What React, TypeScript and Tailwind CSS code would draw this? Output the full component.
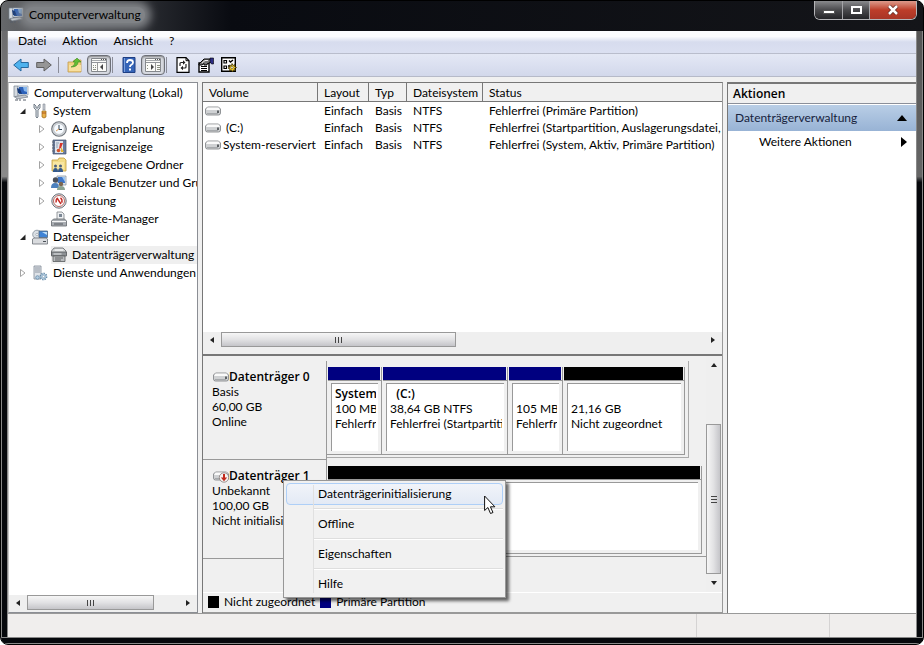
import React, { useState } from 'react';
import { clsx } from 'clsx';

type IconProps = { className?: string };

const Svg: React.FC<{ className?: string; box?: string; children: React.ReactNode }> = ({ className, box = '0 0 16 16', children }) => (
  <svg viewBox={box} className={clsx('shrink-0', className ?? 'w-4 h-4')} aria-hidden="true">
    {children}
  </svg>
);

const ComputerIcon = ({ className }: IconProps) => (
  <Svg className={className}>
    <path d="M1 1h4v11H1z" fill="#d5dae0" stroke="#77818e" strokeWidth=".7" />
    <path d="M5 1h10v9H5z" fill="#e9eef4" stroke="#8795a6" strokeWidth=".7" />
    <path d="M6 2h8v7H6z" fill="#2d62ba" />
    <path d="M10 2h4v5l-3-1z" fill="#86b7ee" />
    <path d="M4 3l3 1 2 5-4-1z" fill="#173a78" />
    <path d="M2 11.500l10-1.500 3 2-11 2z" fill="#c3c8ce" stroke="#707984" strokeWidth=".7" />
    <path d="M2 15h3M6 15h2M10 15h3" stroke="#555d68" />
  </Svg>
);

const ToolsIcon = () => (
  <Svg>
    <path d="M2 1v4l2 2v7q1 2 2 0V7l2-2V1L6 3v2H4V3z" fill="#dfe4e9" stroke="#6a747f" strokeWidth=".9" />
    <path d="M11 1h2v6h-2z" fill="#c9ced4" stroke="#808890" strokeWidth=".6" />
    <path d="M10 8h4v6q-2 2-4 0z" fill="#e9b04a" stroke="#9b6a17" strokeWidth=".7" />
    <path d="M10 10h4" stroke="#b0581a" />
  </Svg>
);

const ClockIcon = () => (
  <Svg>
    <circle cx="8" cy="8" r="7.3" fill="#d4d7da" stroke="#6f757c" strokeWidth="1.100" />
    <circle cx="8" cy="8" r="5.4" fill="#f7fbff" stroke="#a6acb4" strokeWidth=".6" />
    <path d="M8 4v4.5h3" fill="none" stroke="#345" strokeWidth="1" />
    <path d="M8 8L5 10" stroke="#d98b38" strokeWidth=".8" />
  </Svg>
);

const EventIcon = () => (
  <Svg>
    <path d="M2 1h13v14H2z" fill="#6a7da0" stroke="#44516a" strokeWidth=".7" />
    <path d="M4 2h8v12H4z" fill="#dfe4ec" />
    <path d="M1 3h3M1 6h3M1 9h3M1 12h3" stroke="#5c6677" />
    <path d="M5 4h3M5 6h2M5 8h2" stroke="#7e8fa8" strokeWidth=".8" />
    <path d="M9 4l3 0-2 5-2 1z" fill="#d5362b" />
    <circle cx="7.500" cy="11.500" r="1.800" fill="#d3542b" />
    <path d="M10 8l3 5h-3z" fill="#e6b52e" />
  </Svg>
);

const SharedFolderIcon = () => (
  <Svg>
    <path d="M1 3h6l1-2h5l2 2v11H1z" fill="#f3dc87" stroke="#c29d3c" strokeWidth=".8" />
    <path d="M2 5h11v7H2z" fill="#f9e7a2" />
    <circle cx="4.500" cy="9" r="1.500" fill="#4d5f7c" />
    <circle cx="9.500" cy="9" r="1.500" fill="#4d5f7c" />
    <path d="M2 15q0-4 2.500-4T7 15zM7 15q0-4 2.500-4t2.500 4z" fill="#345a8c" />
  </Svg>
);

const UsersIcon = () => (
  <Svg>
    <path d="M6 1h9v9H6z" fill="#e2e8ef" stroke="#7d8998" strokeWidth=".7" />
    <path d="M7 2h7v6H7z" fill="#3d76c9" />
    <path d="M11 2h3v5z" fill="#9ac5f2" />
    <circle cx="4.500" cy="5" r="2.700" fill="#4a4f58" />
    <path d="M0 13q0-5 4-5t4 5z" fill="#4b80bd" />
    <circle cx="10" cy="9" r="2.200" fill="#7c6750" />
    <path d="M6 15q0-4 4-4t4 4z" fill="#8aa392" />
  </Svg>
);

const GaugeIcon = () => (
  <Svg>
    <circle cx="8" cy="8" r="7.200" fill="#e2e4e6" stroke="#6d737b" strokeWidth="1" />
    <circle cx="8" cy="8" r="5.500" fill="#fff" stroke="#b05b55" strokeWidth=".9" />
    <path d="M5.200 9.500q-.6-3 1.300-4.500M6 5l4 6M9.500 4.700q2.300 2 1.200 5" fill="none" stroke="#c52a24" strokeWidth="1.400" />
  </Svg>
);

const DeviceIcon = () => (
  <Svg>
    <path d="M6 1h5l2 2v6H6z" fill="#eef0f2" stroke="#7c8085" strokeWidth=".8" />
    <path d="M0.500 10l2-2h11l2 2v5h-15z" fill="#a9adb2" stroke="#63676c" strokeWidth=".8" />
    <path d="M1 10.500h14" stroke="#f5f5f5" />
    <path d="M3 13h9" stroke="#55595e" />
    <path d="M8 3h3v3H8z" fill="#7b8794" />
  </Svg>
);

const StorageIcon = () => (
  <Svg>
    <circle cx="5" cy="5.500" r="4.300" fill="#dbe0e5" stroke="#7f8b97" strokeWidth=".8" />
    <circle cx="5" cy="5.500" r="1.200" fill="#fff" stroke="#8b95a0" strokeWidth=".6" />
    <path d="M7 2h8.500v6.500H7z" fill="#3f83d6" stroke="#54677c" strokeWidth=".8" />
    <path d="M10 3h5v3z" fill="#bfe0fa" />
    <path d="M.5 10l1.500-1h12l1.500 1v5H.5z" fill="#d9dbde" stroke="#6b7076" strokeWidth=".8" />
    <path d="M11 12.500h3" stroke="#4b5157" strokeWidth="1.200" />
  </Svg>
);

const DiskMgmtIcon = () => (
  <Svg>
    <path d="M3 1h9l3 3v4H.5V4z" fill="#d3d6d8" stroke="#5d6063" strokeWidth=".8" />
    <path d="M4 3h8" stroke="#fff" />
    <path d="M.5 5h15v4H.5z" fill="#8d9195" stroke="#505356" strokeWidth=".7" />
    <path d="M2.500 7h8" stroke="#e8eaec" />
    <path d="M2 9h12v5.500H2z" fill="#b9bcbf" stroke="#55585b" strokeWidth=".8" />
    <path d="M4 11h8M4 13h6" stroke="#4c4f52" strokeWidth=".8" />
  </Svg>
);

const ServicesIcon = () => (
  <Svg>
    <path d="M2 1h7v13H2z" fill="#dfe3e8" stroke="#7f8994" strokeWidth=".8" />
    <path d="M3 3h5M3 5h5M3 7h5" stroke="#7b8792" strokeWidth=".8" />
    <circle cx="11.500" cy="11.500" r="3" fill="#c6dced" stroke="#668ba9" strokeWidth="1.800" strokeDasharray="1.300 1" />
    <circle cx="11.500" cy="11.500" r="1.200" fill="#fff" stroke="#668ba9" strokeWidth=".6" />
    <circle cx="5.500" cy="12.500" r="1.800" fill="#b3cce0" stroke="#668ba9" strokeWidth=".8" />
  </Svg>
);

const DriveIcon = ({ alert = false }: { alert?: boolean }) => (
  <Svg>
    <path d="M2.500 4h11l2 2v4q0 2-2 2h-11q-2 0-2-2V6z" fill="#cfd1d3" stroke="#7b7e81" strokeWidth=".8" />
    <path d="M2.500 4.500h11l1.500 2.500H1z" fill="#fafafa" />
    <path d="M2 10.500h11" stroke="#a6a9ac" />
    <path d="M12 7.500h2v2.500h-2z" fill="#5d6164" />
    {alert && (
      <>
        <circle cx="11" cy="9.500" r="4.700" fill="#f6f3f2" stroke="#857b79" strokeWidth=".8" />
        <path d="M10 6h2v3.500h2.200L11 13.300 7.800 9.500H10z" fill="#c22a1c" />
      </>
    )}
  </Svg>
);

const ArrowIcon = ({ back = false }: { back?: boolean }) => (
  <Svg>
    {back ? (
      <path d="M.7 8L8 2v3.500h7.300v5H8V14z" fill="#4eb2ee" stroke="#27699f" strokeWidth="1" />
    ) : (
      <path d="M15.300 8L8 2v3.500H.7v5H8V14z" fill="#969696" stroke="#606060" strokeWidth="1" />
    )}
  </Svg>
);

const FolderUpIcon = () => (
  <Svg>
    <path d="M1 5h5l1-2h7v12H1z" fill="#f2d384" stroke="#c29a4c" strokeWidth=".8" />
    <path d="M2 8h12v6H2z" fill="#f8e0a0" />
    <path d="M4 10q4-1 4-5H6l4-4 4 4h-3q0 5-7 5" fill="#62bd35" stroke="#3d8b20" strokeWidth=".6" />
  </Svg>
);

const PaneIcon = ({ right = false }: { right?: boolean }) => (
  <Svg className="w-4 h-4">
    <path d="M.5 1.500h15v13H.5z" fill="#fbfbf8" stroke="#85888c" />
    <path d="M1 3.500h14" stroke="#a5a8ab" strokeWidth="1" />
    <path d="M10 2.500h1M12 2.500h1M14 2.500h1" stroke="#555" strokeWidth="1" />
    <path d="M1 5.500h14" stroke="#92959a" strokeWidth="1" />
    {right ? (
      <>
        <path d="M10.500 6v8" stroke="#999" />
        <path d="M12 8.500h3M12 10.500h3M12 12.500h3M2 8.500h1M2 11.500h1" stroke="#8b8f82" />
        <path d="M6 7l3 3-3 3z" fill="#444" />
      </>
    ) : (
      <>
        <path d="M6.500 6v8" stroke="#999" />
        <path d="M2 8.500h1M4 8.500h1M2 10.500h1M4 10.500h1M2 12.500h3" stroke="#8b8f82" />
        <path d="M12 7l-3 3 3 3z" fill="#444" />
      </>
    )}
  </Svg>
);

const HelpIcon = () => (
  <Svg>
    <path d="M2 .5h12v15H2z" fill="#3564b8" stroke="#1f3f83" />
    <path d="M3.500 1v14" stroke="#7ba0dc" />
    <path d="M6 6q0-3 3-3t3 2.500q0 1.500-2 2.500-1 .5-1 2" fill="none" stroke="#fff" strokeWidth="1.800" />
    <path d="M8 11.500h2v2H8z" fill="#fff" />
  </Svg>
);

const RefreshIcon = () => (
  <Svg>
    <path d="M2 .7h9l3 3v11.600H2z" fill="#fff" stroke="#000" strokeWidth="1.200" />
    <path d="M11 .7v3h3" fill="none" stroke="#000" />
    <path d="M5 9V6.500q0-1 1-1h3M11 7v3q0 1-1 1H7" fill="none" stroke="#222" strokeWidth="1.200" />
    <path d="M8 3.300v4.400l2.500-2.200zM8 8.800v4.400L5.500 11z" fill="#222" />
  </Svg>
);

const PropertiesIcon = () => (
  <Svg>
    <path d="M1 6h10v9H1z" fill="#fff" stroke="#000" strokeWidth="1.400" />
    <path d="M3 9.500h6M3 11.500h6M3 13.500h6" stroke="#000" />
    <path d="M1 7l5-5h6l1 3-4 2v1H6V6.500L4 8H1z" fill="#777" stroke="#000" strokeWidth="1" />
    <path d="M4 6l3-2.500h3" fill="none" stroke="#eee" />
    <path d="M12 1h3.500v6h-2L12 5z" fill="#2c2c86" stroke="#000" strokeWidth=".6" />
  </Svg>
);

const SettingsIcon = () => (
  <Svg>
    <path d="M.7 .7h13.600v13.600H.7z" fill="#fff" stroke="#000" strokeWidth="1.400" />
    <path d="M3 3.500h2.500V6H3zM3 9h2.500v2.500H3z" fill="none" stroke="#000" strokeWidth="1.200" />
    <path d="M8 3.500l1.500 1.500L12 3M7 9h2" fill="none" stroke="#000" strokeWidth="1.400" />
    <path d="M11 6.500l1 2 2-1-.5 2 2 1-2 1 1 2-2-.500-1 2-1-2-2 1 .5-2-2-1 2-1-.5-2 2 .5z" fill="#efc92f" stroke="#3b3000" strokeWidth=".8" />
    <circle cx="11" cy="10.500" r="1.100" fill="#fff" stroke="#3b3000" strokeWidth=".5" />
  </Svg>
);

const Triangle: React.FC<{ dir: 'left' | 'right' | 'up' | 'down' }> = ({ dir }) => {
  const paths = {
    left: 'M6 1v6L2 4z',
    right: 'M2 1v6l4-3z',
    up: 'M1 6h6L4 2z',
    down: 'M1 2h6L4 6z',
  };
  return (
    <Svg box="0 0 8 8" className="w-2 h-2">
      <path d={paths[dir]} fill="#222" />
    </Svg>
  );
};

interface TreeNode {
  label: string;
  icon: React.FC;
  level: 0 | 1 | 2;
  state?: 'open' | 'closed';
}

const treeNodes: TreeNode[] = [
  { label: 'Computerverwaltung (Lokal)', icon: ComputerIcon, level: 0 },
  { label: 'System', icon: ToolsIcon, level: 1, state: 'open' },
  { label: 'Aufgabenplanung', icon: ClockIcon, level: 2, state: 'closed' },
  { label: 'Ereignisanzeige', icon: EventIcon, level: 2, state: 'closed' },
  { label: 'Freigegebene Ordner', icon: SharedFolderIcon, level: 2, state: 'closed' },
  { label: 'Lokale Benutzer und Gruppen', icon: UsersIcon, level: 2, state: 'closed' },
  { label: 'Leistung', icon: GaugeIcon, level: 2, state: 'closed' },
  { label: 'Geräte-Manager', icon: DeviceIcon, level: 2 },
  { label: 'Datenspeicher', icon: StorageIcon, level: 1, state: 'open' },
  { label: 'Datenträgerverwaltung', icon: DiskMgmtIcon, level: 2 },
  { label: 'Dienste und Anwendungen', icon: ServicesIcon, level: 1, state: 'closed' },
];

const indent = { 0: 'pl-1', 1: 'pl-2', 2: 'pl-[27px]' };

const volumes = [
  { name: '', status: 'Fehlerfrei (Primäre Partition)' },
  { name: ' (C:)', status: 'Fehlerfrei (Startpartition, Auslagerungsdatei,' },
  { name: 'System-reserviert', status: 'Fehlerfrei (System, Aktiv, Primäre Partition)' },
];

const columns = [
  { label: 'Volume', width: 'w-[115px]' },
  { label: 'Layout', width: 'w-[51px]' },
  { label: 'Typ', width: 'w-[38px]' },
  { label: 'Dateisystem', width: 'w-[76px]' },
  { label: 'Status', width: '' },
];

const partitions = [
  { name: 'System', size: '100 MB', status: 'Fehlerfrei', width: 'w-[55px]', bar: 'bg-[#000080]' },
  { name: '  (C:)', size: '38,64 GB NTFS', status: 'Fehlerfrei (Startpartition)', width: 'w-[126px]', bar: 'bg-[#000080]' },
  { name: '', size: '105 MB', status: 'Fehlerfrei', width: 'w-[55px]', bar: 'bg-[#000080]' },
  { name: '', size: '21,16 GB', status: 'Nicht zugeordnet', width: 'w-[122px]', bar: 'bg-black' },
];

const menuItems = ['Datenträgerinitialisierung', 'Offline', 'Eigenschaften', 'Hilfe'];

const ToolSeparator = () => <span className="w-px h-4 bg-[#8b8d98]" />;

const HScroll: React.FC<{ thumb: string }> = ({ thumb }) => (
  <div className="flex items-center h-4 shrink-0 bg-[#efefef]">
    <button aria-label="Nach links" className="w-[18px] h-4 flex items-center justify-center"><Triangle dir="left" /></button>
    <div className="flex-1 h-4">
      <div className={clsx('h-[15px] border border-[#999] bg-linear-to-b from-[#f6f6f6] via-[#e2e2e4] to-[#c5c5c9] flex items-center justify-center gap-0.5', thumb)}>
        <span className="w-px h-1.5 bg-[#444]" />
        <span className="w-px h-1.5 bg-[#444]" />
        <span className="w-px h-1.5 bg-[#444]" />
      </div>
    </div>
    <button aria-label="Nach rechts" className="w-[18px] h-4 flex items-center justify-center"><Triangle dir="right" /></button>
  </div>
);

const TitleBar = () => (
  <header className="h-[30px] shrink-0 flex items-start justify-between pl-[7px] pr-[6px]">
    <div className="flex items-center gap-px h-7">
      <ComputerIcon />
      <h1 className="px-1 rounded-full bg-[#808387] shadow-[0_0_8px_6px_#808387]">Computerverwaltung</h1>
    </div>
    <div className="flex h-[19px] border border-t-0 border-[#b5b5b8] rounded-b-md overflow-hidden">
      <button aria-label="Minimieren" className="w-7 flex items-center justify-center border-r border-[#a5a5a8] bg-linear-to-b from-[#8a8b8e] via-[#4a4a4d] to-[#252528]">
        <span className="w-3 h-1 mt-1 bg-white border border-[#555]" />
      </button>
      <button aria-label="Maximieren" className="w-[27px] flex items-center justify-center border-r border-[#a5a5a8] bg-linear-to-b from-[#8a8b8e] via-[#4a4a4d] to-[#252528]">
        <span className="w-[11px] h-2 border-2 border-white" />
      </button>
      <button aria-label="Schließen" className="w-[46px] flex items-center justify-center bg-linear-to-b from-[#dc9a8b] via-[#bd3d29] to-[#a83526]">
        <Svg box="0 0 12 10" className="w-3 h-2.5">
          <path d="M2 1l8 8M10 1L2 9" stroke="#5b2620" strokeWidth="4" />
          <path d="M2 1l8 8M10 1L2 9" stroke="#fff" strokeWidth="2.500" />
        </Svg>
      </button>
    </div>
  </header>
);

const MenuBar = () => (
  <nav className="h-[23px] shrink-0 flex items-center gap-4 px-[10px] pb-0.5 bg-linear-to-b from-[#fbfcfe] from-25% via-[#d7dcee] via-50% to-[#dbe0f1] border-b border-[#b9bdcc]">
    {['Datei', 'Aktion', 'Ansicht', '?'].map((item) => (
      <button key={item}>{item}</button>
    ))}
  </nav>
);

const ToolBar = () => (
  <div className="h-[23px] shrink-0 flex items-center pl-[5px] bg-linear-to-b from-[#e4e8f5] to-[#d2d8eb] border-b border-[#b6bac8]">
    <div className="flex items-center gap-[7px] pr-[6px]">
      <button aria-label="Zurück"><ArrowIcon back /></button>
      <button aria-label="Vorwärts"><ArrowIcon /></button>
    </div>
    <ToolSeparator />
    <div className="flex items-center gap-1 pl-2 pr-px">
      <button aria-label="Eine Ebene nach oben"><FolderUpIcon /></button>
      <button aria-label="Konsolenstruktur" className="w-6 h-5 rounded border border-[#6d7078] bg-[#d8dbe2] shadow-[inset_0_1px_2px_#888] flex items-center justify-center"><PaneIcon /></button>
    </div>
    <ToolSeparator />
    <div className="flex items-center gap-1 pl-2 pr-px">
      <button aria-label="Hilfe"><HelpIcon /></button>
      <button aria-label="Aktionsbereich" className="w-6 h-5 rounded border border-[#6d7078] bg-[#d8dbe2] shadow-[inset_0_1px_2px_#888] flex items-center justify-center"><PaneIcon right /></button>
    </div>
    <ToolSeparator />
    <div className="flex items-center gap-[7px] pl-2">
      <button aria-label="Aktualisieren"><RefreshIcon /></button>
      <button aria-label="Eigenschaften"><PropertiesIcon /></button>
      <button aria-label="Einstellungen"><SettingsIcon /></button>
    </div>
  </div>
);

const Tree: React.FC<{ selected: string; onSelect: (label: string) => void }> = ({ selected, onSelect }) => (
  <aside className="w-[190px] shrink-0 flex flex-col bg-white border border-[#8b8e94] border-l-[#c8c8c8]">
    <ul className="flex-1 min-h-0 overflow-hidden pt-px">
      {treeNodes.map(({ label, icon: Icon, level, state }) => (
        <li key={label} className={clsx('h-[18px] flex items-center', indent[level])}>
          {level > 0 && (
            <span className="w-[15px] shrink-0 flex items-center pl-[2px]">
              {state === 'open' && (
                <Svg box="0 0 8 8" className="w-2 h-2"><path d="M6.500 1.500v5.500H1z" fill="#222" /></Svg>
              )}
              {state === 'closed' && (
                <Svg box="0 0 8 8" className="w-2 h-2"><path d="M1.500.5v7l4.500-3.500z" fill="#fff" stroke="#999" strokeWidth=".9" /></Svg>
              )}
            </span>
          )}
          <button
            onClick={() => onSelect(label)}
            className={clsx('h-[18px] flex flex-1 items-center gap-[5px] whitespace-nowrap text-left', selected === label && 'bg-[#efefef]')}
          >
            <Icon />
            {label}
          </button>
        </li>
      ))}
    </ul>
    <HScroll thumb="w-[127px]" />
    <div className="h-px shrink-0 bg-[#efefef]" />
  </aside>
);

const VolumeList = () => (
  <section className="h-[273px] shrink-0 flex flex-col bg-white">
    <div className="flex-1 min-h-0 overflow-hidden">
      <table className="w-full table-fixed border-separate border-spacing-0">
        <thead>
          <tr className="h-[19px] bg-[#f0f0f0]">
            {columns.map((col) => (
              <th
                key={col.label}
                className={clsx('p-0 pl-[6px] h-[19px] leading-[17px] font-normal text-left border-b border-[#777]', col.width, col.width && 'border-r')}
              >
                {col.label}
              </th>
            ))}
          </tr>
        </thead>
        <tbody>
          {volumes.map((v) => (
            <tr key={v.status} className="h-[17px] leading-[17px] whitespace-pre">
              <td className="p-0 pl-0.5">
                <div className="flex items-center gap-0.5 h-[17px]">
                  <DriveIcon />
                  {v.name}
                </div>
              </td>
              <td className="p-0 pl-[6px]">Einfach</td>
              <td className="p-0 pl-[6px]">Basis</td>
              <td className="p-0 pl-[6px]">NTFS</td>
              <td className="p-0 pl-[6px] overflow-hidden">{v.status}</td>
            </tr>
          ))}
        </tbody>
      </table>
    </div>
    <HScroll thumb="w-[235px]" />
    <div className="h-2 shrink-0 bg-[#efefef] border-b-2 border-[#777]" />
  </section>
);

interface PartitionProps {
  name?: string;
  size?: string;
  status?: string;
  width: string;
  bar: string;
}

const Partition: React.FC<PartitionProps> = ({ name = '', size, status, width, bar }) => (
  <div className={clsx('shrink-0 h-[88px] pl-px border-r border-b border-[#999] flex flex-col', width)}>
    <div className={clsx('h-[13px] shrink-0 mr-px', bar)} />
    <div className="h-px shrink-0 bg-[#999]" />
    <div className="flex-1 mt-0.5 mb-[3px] ml-[3px] mr-[3px] border-l border-t border-[#999] bg-white">
      <div className="h-full pt-0.5 pl-[3px] mr-0.5 overflow-hidden whitespace-pre leading-[15px]">
        <p className="font-['Open_Sans',sans-serif] font-semibold h-[15px]">{name}</p>
        <p>{size}</p>
        <p>{status}</p>
      </div>
    </div>
  </div>
);

const DiskLabel: React.FC<{ name: string; lines: string[]; alert?: boolean }> = ({ name, lines, alert }) => (
  <div className="w-[124px] shrink-0 h-[99px] pt-2 pl-[9px] border-r border-b border-[#999] leading-[15px] whitespace-nowrap overflow-hidden">
    <div className="flex items-center h-[15px] font-['Open_Sans',sans-serif] font-semibold pl-px">
      <DriveIcon alert={alert} />
      {name}
    </div>
    {lines.map((line) => (
      <p key={line}>{line}</p>
    ))}
  </div>
);

const ContextMenu = () => (
  <div role="menu" className="absolute left-20 top-[124px] w-[223px] p-[2px] bg-[#f1f1f1] border border-[#979797] shadow-[3px_3px_3px_#0009]">
    {menuItems.map((item, i) => (
      <React.Fragment key={item}>
        {i > 0 && <div className="ml-7 my-[3px] h-0.5 border-t border-[#dedede] bg-white" />}
        <button
          role="menuitem"
          className={clsx(
            'block w-full h-[22px] pl-[31px] text-left rounded-sm border',
            i === 0 ? 'border-[#aecff7] bg-linear-to-b from-[#f1f4f9] to-[#e3eaf5]' : 'border-transparent'
          )}
        >
          {item}
        </button>
      </React.Fragment>
    ))}
    <span className="absolute left-[29px] top-1 bottom-1 w-px bg-[#e0e0e0]" />
    <svg viewBox="0 0 12 19" className="absolute left-[200px] top-[14px] w-3 h-[19px]" aria-hidden="true">
      <path d="M.6 1v14.500l3.300-3 2.600 6 2.500-1-2.600-5.700h4.500z" fill="#fff" stroke="#111" />
    </svg>
  </div>
);

const DiskView = () => (
  <section className="relative flex-1 min-h-0 flex flex-col bg-[#f0f0f0]">
    <div className="flex-1 min-h-0 flex">
      <div className="flex-1 min-w-0 overflow-hidden pt-[5px]">
        <div className="flex">
          <DiskLabel name="Datenträger 0" lines={['Basis', '60,00 GB', 'Online']} />
          <div className="flex h-[97px] pt-[6px] pr-[3px] border-r border-b border-[#aaa]">
            {partitions.map((p) => (
              <Partition key={p.size} {...p} />
            ))}
          </div>
        </div>
        <div className="flex">
          <DiskLabel name="Datenträger 1" lines={['Unbekannt', '100,00 GB', 'Nicht initialisiert']} alert />
          <div className="flex-1 h-[97px] pt-[6px] border-b border-[#999]">
            <Partition width="w-[375px]" bar="bg-black" />
          </div>
        </div>
      </div>
      <div className="w-4 shrink-0 flex flex-col items-center bg-[#efefef]">
        <button aria-label="Nach oben" className="h-[18px] flex items-center"><Triangle dir="up" /></button>
        <div className="flex-1 w-4 flex flex-col justify-end">
          <div className="h-[150px] w-[15px] border border-[#999] bg-linear-to-r from-[#f6f6f6] via-[#e2e2e4] to-[#c5c5c9] flex flex-col items-center justify-center gap-0.5">
            <span className="w-1.5 h-px bg-[#444]" />
            <span className="w-1.5 h-px bg-[#444]" />
            <span className="w-1.5 h-px bg-[#444]" />
          </div>
        </div>
        <button aria-label="Nach unten" className="h-[18px] flex items-center"><Triangle dir="down" /></button>
      </div>
    </div>
    <div className="h-[21px] shrink-0 flex items-center gap-[5px] pl-[5px] pb-px border-t border-white border-b border-b-[#999]">
      <span className="w-[11px] h-3 bg-black" />
      Nicht zugeordnet
      <span className="w-[11px] h-3 bg-[#000080]" />
      Primäre Partition
    </div>
    <ContextMenu />
  </section>
);

const ActionsPane = () => (
  <aside className="w-[189px] shrink-0 bg-white border-t-2 border-l border-[#777]">
    <h2 className="h-5 pl-[5px] leading-5 font-['Open_Sans',sans-serif] font-semibold bg-[#f0f0f0] border-b border-[#8b8f99]">Aktionen</h2>
    <button className="w-full h-[26px] mt-px pl-[7px] pr-[9px] flex items-center justify-between bg-linear-to-b from-[#b9cee6] to-[#98b3d5] text-[#17233d]">
      Datenträgerverwaltung
      <Svg box="0 0 10 6" className="w-2.5 h-1.5"><path d="M0 6h10L5 0z" fill="#000" /></Svg>
    </button>
    <button className="w-full h-[22px] pl-[31px] pr-[9px] flex items-center justify-between">
      Weitere Aktionen
      <Svg box="0 0 6 10" className="w-1.5 h-2.5"><path d="M0 0v10l6-5z" fill="#000" /></Svg>
    </button>
  </aside>
);

export default function App() {
  const [selected, setSelected] = useState('Datenträgerverwaltung');

  return (
    <div className="h-screen bg-white text-black text-xs font-['Lato','Open_Sans',sans-serif]">
      <div className="h-full flex flex-col rounded-lg border border-black bg-linear-to-r from-[#66686b] via-[#090b11] via-25% to-[#141519] overflow-hidden">
        <TitleBar />
        <div className="flex-1 min-h-0 flex">
          <div className="w-[7px] shrink-0 border-x border-[#888] bg-linear-to-b from-[#6c6c6e] from-0% via-[#8a8a8a] via-24% to-[#06080c] to-25%" />
          <main className="flex-1 min-w-0 flex flex-col bg-[#f0f0f0]">
            <MenuBar />
            <ToolBar />
            <div className="flex-1 min-h-0 flex gap-1 pt-[5px]">
              <Tree selected={selected} onSelect={setSelected} />
              <div className="flex-1 min-w-0 flex flex-col border-l border-t border-[#777] border-r border-r-[#999]">
                <VolumeList />
                <DiskView />
              </div>
              <ActionsPane />
            </div>
            <footer className="h-6 shrink-0 flex border-t border-[#999] bg-[#f0eeed]">
              <span className="flex-1 border-r border-[#d5d3d3]" />
              <span className="w-[133px] border-r border-[#d5d3d3]" />
              <span className="w-[86px]" />
            </footer>
          </main>
          <div className="w-[7px] shrink-0 border-x border-[#888] bg-linear-to-b from-[#555] from-0% via-[#666] via-24% to-[#06080c] to-25%" />
        </div>
        <div className="h-[7px] shrink-0 bg-[#06080c] border-y border-[#888]" />
      </div>
    </div>
  );
}
